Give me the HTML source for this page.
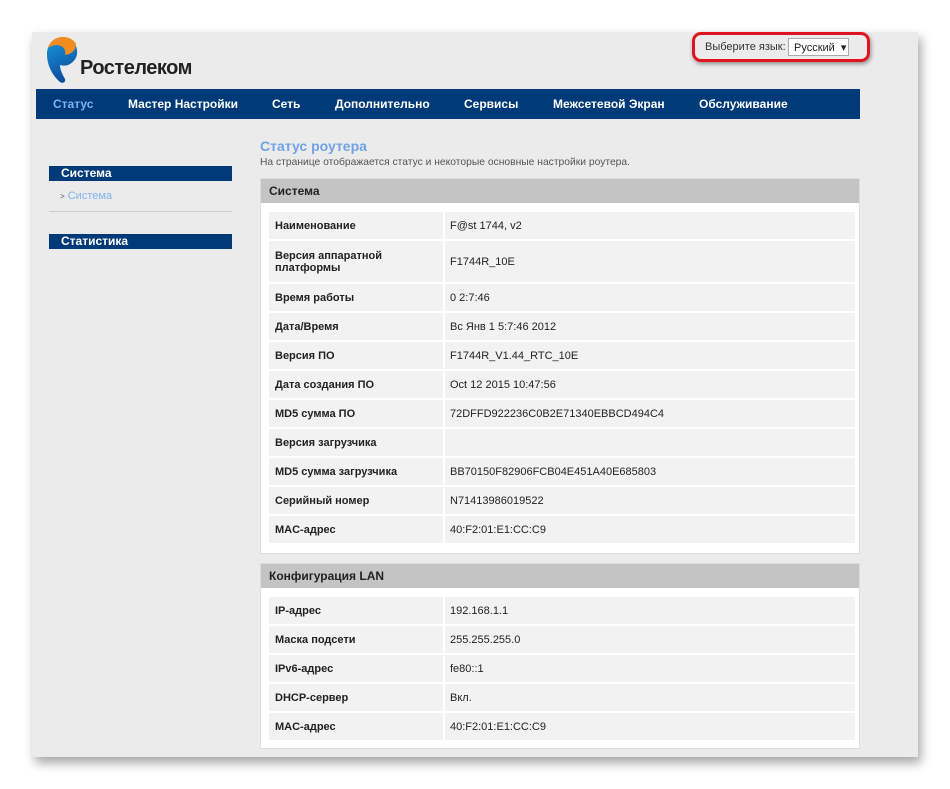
<!DOCTYPE html>
<html><head><meta charset="utf-8"><style>
*{box-sizing:border-box;margin:0;padding:0}
body{width:950px;height:789px;background:#fff;font-family:"Liberation Sans",Arial,sans-serif;position:relative;overflow:hidden}
.panel{position:absolute;left:32px;top:32px;width:886px;height:725px;background:#ebebeb;box-shadow:3px 6px 10px rgba(0,0,0,.35)}
.abs{position:absolute}
.nav{left:36px;top:89px;width:824px;height:30px;background:#003a78}
.nav span{position:absolute;top:8px;font-size:12px;font-weight:bold;color:#fff}
.side{left:49px;width:183px;height:15px;background:#003a78;color:#fff;font-size:12px;font-weight:bold;padding-left:12px;line-height:15px}
.box{left:260px;width:600px;background:#fff;border:1px solid #ddd}
.hdr{height:24px;background:#c4c4c4;font-size:12px;font-weight:bold;color:#222;padding-left:8px;line-height:24px}
table{border-collapse:separate;border-spacing:2px;margin:7px 0 7px 6px;width:590px}
td{background:#f2f2f2;height:27px;font-size:11px;color:#222;vertical-align:middle}
td.l{width:174px;font-weight:bold;padding-left:6px}
td.v{padding-left:5px}
</style></head><body>
<div class="panel"></div>
<svg class="abs" style="left:46px;top:36px" width="34" height="48" viewBox="0 0 34 48">
<defs><linearGradient id="g" x1="0" y1="0" x2="0.3" y2="1"><stop offset="0" stop-color="#1a9ad9"/><stop offset="1" stop-color="#0d4ea0"/></linearGradient></defs>
<path d="M17 1C8 1 1 8 1 18c0 11 5 21 13 28 3 2 6 0 5-3-3-5-5-10-5-14 3 1 7 1 10-1 5-3 8-8 7-14C30 6 24 1 17 1z" fill="url(#g)"/>
<path d="M17 1C10 1 4 5 2 12c4-3 9-4 13-2 4 2 5 6 4 9 7-1 11-5 11-11C28 4 23 1 17 1z" fill="#f28c1e"/>
</svg>
<div class="abs" style="left:80px;top:57px;font-size:20px;font-weight:bold;color:#222;letter-spacing:-0.5px">Ростелеком</div>
<div class="abs" style="left:692px;top:32px;width:178px;height:30px;border:3px solid #e0141e;border-radius:9px;box-shadow:1px 2px 4px rgba(0,0,0,.4)"></div>
<div class="abs" style="left:705px;top:41px;font-size:11px;color:#333">Выберите язык:</div>
<div class="abs" style="left:788px;top:38px;width:61px;height:18px;background:#fff;border:1px solid #aaa;font-size:11px;color:#222;padding:2px 0 0 5px">Русский&nbsp;&nbsp;▾</div>
<div class="abs nav">
<span style="left:17px;color:#7fb2f0">Статус</span>
<span style="left:92px">Мастер Настройки</span>
<span style="left:236px">Сеть</span>
<span style="left:299px">Дополнительно</span>
<span style="left:428px">Сервисы</span>
<span style="left:517px">Межсетевой Экран</span>
<span style="left:663px">Обслуживание</span>
</div>
<div class="abs side" style="top:166px">Система</div>
<div class="abs" style="left:60px;top:190px;font-size:11px;color:#7fb2f0"><span style="color:#555;font-size:8px">&gt;</span> Система</div>
<div class="abs" style="left:49px;top:211px;width:183px;height:1px;background:#ccc"></div>
<div class="abs side" style="top:234px">Статистика</div>
<div class="abs" style="left:260px;top:138px;font-size:14px;font-weight:bold;color:#6fa3e6">Статус роутера</div>
<div class="abs" style="left:260px;top:157px;font-size:10.3px;color:#555">На странице отображается статус и некоторые основные настройки роутера.</div>
<div class="abs box" style="top:178px;height:376px">
<div class="hdr">Система</div>
<table>
<tr><td class="l">Наименование</td><td class="v">F@st 1744, v2</td></tr>
<tr><td class="l" style="height:41px">Версия аппаратной<br>платформы</td><td class="v">F1744R_10E</td></tr>
<tr><td class="l">Время работы</td><td class="v">0 2:7:46</td></tr>
<tr><td class="l">Дата/Время</td><td class="v">Вс Янв 1 5:7:46 2012</td></tr>
<tr><td class="l">Версия ПО</td><td class="v">F1744R_V1.44_RTC_10E</td></tr>
<tr><td class="l">Дата создания ПО</td><td class="v">Oct 12 2015 10:47:56</td></tr>
<tr><td class="l">MD5 сумма ПО</td><td class="v">72DFFD922236C0B2E71340EBBCD494C4</td></tr>
<tr><td class="l">Версия загрузчика</td><td class="v"></td></tr>
<tr><td class="l">MD5 сумма загрузчика</td><td class="v">BB70150F82906FCB04E451A40E685803</td></tr>
<tr><td class="l">Серийный номер</td><td class="v">N71413986019522</td></tr>
<tr><td class="l">MAC-адрес</td><td class="v">40:F2:01:E1:CC:C9</td></tr>
</table></div>
<div class="abs box" style="top:563px;height:186px">
<div class="hdr">Конфигурация LAN</div>
<table>
<tr><td class="l">IP-адрес</td><td class="v">192.168.1.1</td></tr>
<tr><td class="l">Маска подсети</td><td class="v">255.255.255.0</td></tr>
<tr><td class="l">IPv6-адрес</td><td class="v">fe80::1</td></tr>
<tr><td class="l">DHCP-сервер</td><td class="v">Вкл.</td></tr>
<tr><td class="l">MAC-адрес</td><td class="v">40:F2:01:E1:CC:C9</td></tr>
</table></div>
</body></html>
